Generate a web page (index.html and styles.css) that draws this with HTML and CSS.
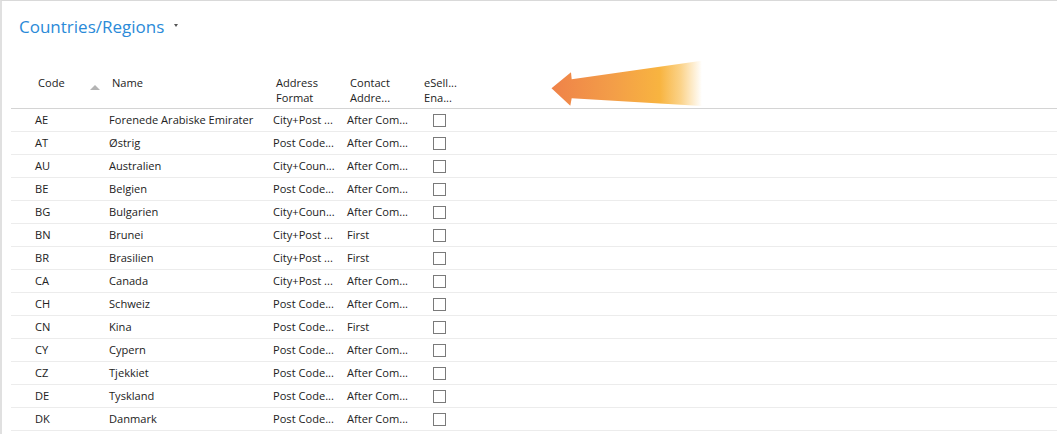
FILE: index.html
```html
<!DOCTYPE html>
<html lang="en">
<head>
  <meta charset="UTF-8">
  <title>Countries/Regions</title>
  <link rel="stylesheet" href="styles.css">
</head>
<body>
  <div class="page">
    <div class="page-head">
      <h1 class="page-title">Countries/Regions</h1>
      <span class="title-caret"></span>
    </div>

    <!-- pointer arrow drawn over the header area -->
    <svg class="hint-arrow" width="160" height="52" viewBox="548 58 160 52">
      <defs>
        <linearGradient id="arrowFill" x1="551" y1="0" x2="702" y2="0" gradientUnits="userSpaceOnUse">
          <stop offset="0" stop-color="#ef8249"/>
          <stop offset="0.4" stop-color="#f39d48"/>
          <stop offset="0.72" stop-color="#f8b440"/>
          <stop offset="0.86" stop-color="#fbd38a"/>
          <stop offset="1" stop-color="#ffffff"/>
        </linearGradient>
      </defs>
      <path d="M551.5 88.3 L571 72.3 L571.7 79.3 L701.7 60.7 L701.7 106 L571.7 98.3 L570.3 105.7 Z" fill="url(#arrowFill)"/>
    </svg>

    <table class="grid">
      <colgroup>
        <col class="col-code">
        <col class="col-name">
        <col class="col-addr">
        <col class="col-contact">
        <col class="col-esell">
        <col>
      </colgroup>
      <thead>
        <tr>
          <th class="cell-code">Code<span class="sort-up"></span></th>
          <th>Name</th>
          <th>Address<br>Format</th>
          <th>Contact<br>Addre...</th>
          <th>eSell...<br>Ena...</th>
          <th></th>
        </tr>
      </thead>
      <tbody id="rows"></tbody>
    </table>
  </div>

  <script>
    const countries = [
      ['AE', 'Forenede Arabiske Emirater', 'City+Post ...', 'After Com...'],
      ['AT', 'Østrig', 'Post Code...', 'After Com...'],
      ['AU', 'Australien', 'City+Coun...', 'After Com...'],
      ['BE', 'Belgien', 'Post Code...', 'After Com...'],
      ['BG', 'Bulgarien', 'City+Coun...', 'After Com...'],
      ['BN', 'Brunei', 'City+Post ...', 'First'],
      ['BR', 'Brasilien', 'City+Post ...', 'First'],
      ['CA', 'Canada', 'City+Post ...', 'After Com...'],
      ['CH', 'Schweiz', 'Post Code...', 'After Com...'],
      ['CN', 'Kina', 'Post Code...', 'First'],
      ['CY', 'Cypern', 'Post Code...', 'After Com...'],
      ['CZ', 'Tjekkiet', 'Post Code...', 'After Com...'],
      ['DE', 'Tyskland', 'Post Code...', 'After Com...'],
      ['DK', 'Danmark', 'Post Code...', 'After Com...']
    ];

    const rows = document.getElementById('rows');
    let html = '';
    countries.forEach(c => {
      html += `<tr>
        <td class="cell-code">${c[0]}</td>
        <td>${c[1]}</td>
        <td>${c[2]}</td>
        <td>${c[3]}</td>
        <td><span class="check"></span></td>
        <td></td>
      </tr>`;
    });
    rows.innerHTML = html;
  </script>
</body>
</html>
```

FILE: styles.css
```css
html, body {
  margin: 0;
  background: #fff;
}
body {
  font-family: 'Open Sans', 'Noto Sans', sans-serif;
  font-size: 11.1px;
  color: #222;
}
.page {
  position: relative;
  height: 434px;
  border-top: 1px solid #d9d9d9;
  border-left: 2px solid #e0e0e0;
  box-sizing: border-box;
  overflow: hidden;
}
.page-head {
  display: flex;
  align-items: center;
  padding: 13px 0 0 17px;
  height: 26px;
}
.page-title {
  margin: 0;
  font-size: 17px;
  font-weight: normal;
  line-height: 26px;
  color: #2a8ad8;
}
.title-caret {
  margin: -3px 0 0 10px;
  width: 0;
  height: 0;
  border-left: 2.5px solid transparent;
  border-right: 2.5px solid transparent;
  border-top: 3px solid #555;
}
.hint-arrow {
  position: absolute;
  left: 546px;
  top: 57px;
}
.grid {
  margin: 35px 0 0 9px;
  width: calc(100% - 9px);
  border-collapse: collapse;
  table-layout: fixed;
}
.col-code { width: 94px; }
.col-name { width: 164px; }
.col-addr { width: 74px; }
.col-contact { width: 74px; }
.col-esell { width: 48px; }
.grid th {
  text-align: left;
  font-weight: normal;
  vertical-align: top;
  line-height: 15px;
  padding: 0 0 3px 7px;
  border-bottom: 1px solid #d4d4d4;
  white-space: nowrap;
}
.grid th.cell-code {
  position: relative;
  padding-left: 27px;
}
.sort-up {
  position: absolute;
  left: 79px;
  top: 10px;
  width: 0;
  height: 0;
  border-left: 5px solid transparent;
  border-right: 5px solid transparent;
  border-bottom: 5px solid #b4b4b4;
}
.grid td {
  height: 20px;
  padding: 0 0 2px 4px;
  border-bottom: 1px solid #ececec;
  white-space: nowrap;
  overflow: hidden;
  vertical-align: middle;
}
.grid td.cell-code {
  padding-left: 24px;
}
.check {
  display: block;
  margin: 2px 0 0 12px;
  width: 11px;
  height: 11px;
  border: 1px solid #7a7a7a;
}
```
